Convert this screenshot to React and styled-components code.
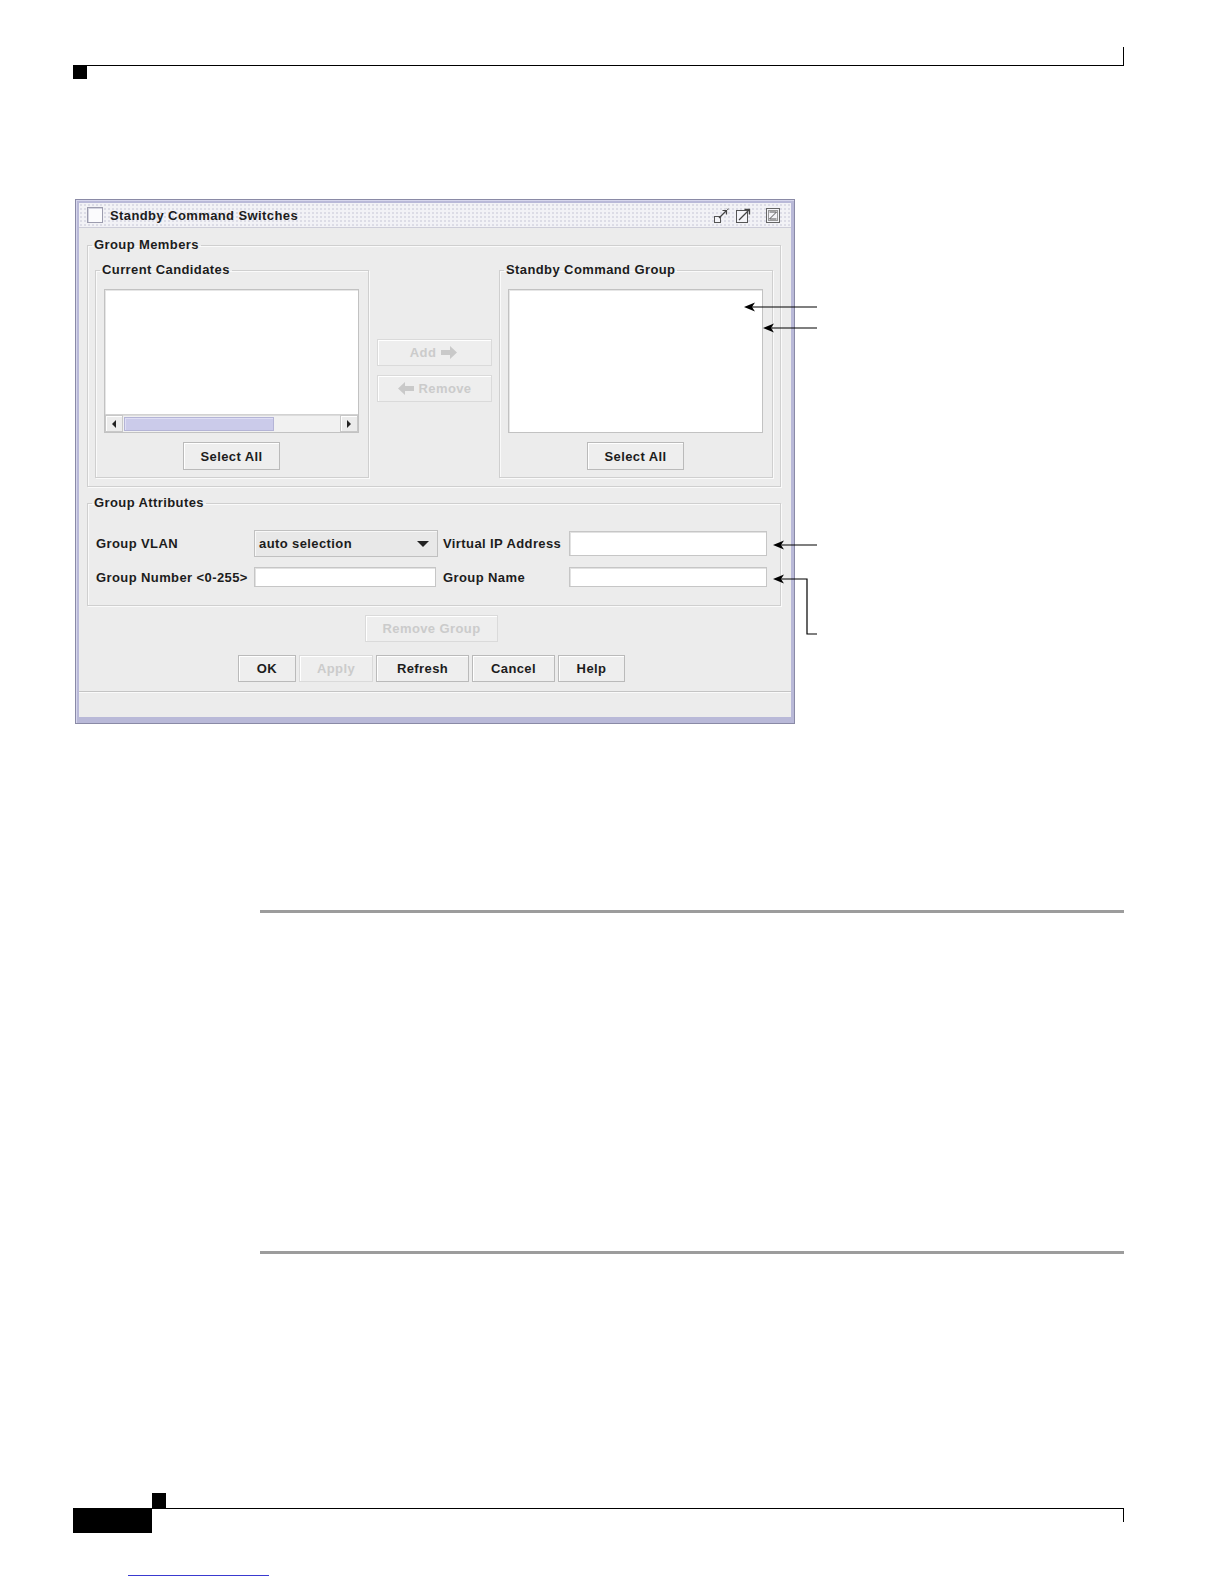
import React from 'react';
import styled, { createGlobalStyle } from 'styled-components';

const Global = createGlobalStyle`
  *, *::before, *::after { box-sizing: border-box; }
  html, body { margin: 0; padding: 0; background: #ffffff; }
  body { font-family: "Liberation Sans", Arial, sans-serif; }
`;

const FONT = `"Liberation Sans", Arial, sans-serif`;

const Page = styled.div`
  width: 1224px;
  height: 1584px;
  display: flex;
  flex-direction: column;
  overflow: hidden;
`;

const HeaderLine = styled.div`
  margin: 47px 0 0 73px;
  width: 1051px;
  height: 19px;
  border-right: 1px solid #000;
  border-bottom: 1px solid #000;
`;

const HeaderMark = styled.div`
  margin-left: 73px;
  width: 14px;
  height: 13px;
  background: #000;
`;

const Figure = styled.div`
  position: relative;
  margin: 120px 0 0 75px;
  width: 760px;
  height: 525px;
`;

const Dialog = styled.div`
  width: 720px;
  height: 525px;
  display: flex;
  flex-direction: column;
  border: 1px solid #8a8aa6;
  padding: 3px 3px 6px 3px;
  background: #b9b9d8;
  box-shadow: inset 1px 1px 0 #d6d6ec;
`;

const TitleBar = styled.div`
  height: 25px;
  flex: none;
  display: flex;
  align-items: center;
  padding: 0 11px 0 8px;
  background-color: #f2f2f6;
  background-image: radial-gradient(#dcdce6 0.9px, transparent 1.1px);
  background-size: 4px 4px;
  border-bottom: 1px solid #cdcdd8;
`;

const TitleBox = styled.div`
  width: 16px;
  height: 16px;
  background: #fbfbfd;
  border: 1px solid #9c9cae;
  box-shadow: inset 1px 1px 0 #d4d4e0;
`;

const TitleText = styled.span`
  margin-left: 7px;
  font: bold 13px ${FONT};
  letter-spacing: 0.4px;
  color: #1c1c1c;
  flex: 1;
`;

const TitleIcons = styled.div`
  display: flex;
  align-items: center;
  gap: 7px;
`;

const TitleIcon = styled.svg`
  display: block;
  margin-left: ${p => p.$gap || 0}px;
`;

const Body = styled.div`
  flex: 1;
  display: flex;
  flex-direction: column;
  background: #ececec;
`;

const Main = styled.div`
  display: flex;
  flex-direction: column;
  padding: 10px 10px 0 8px;
`;

const Group = styled.fieldset`
  margin: ${p => p.$mt || 0}px 0 0 0;
  padding: ${p => p.$pad};
  min-width: 0;
  width: ${p => (p.$w ? `${p.$w}px` : 'auto')};
  border: 1px solid #cfcfcf;
  box-shadow: inset 1px 1px 0 #fafafa, 1px 1px 0 #fafafa;
  display: flex;
  flex-direction: column;
`;

const Legend = styled.legend`
  padding: 0 2px;
  margin-left: ${p => p.$left}px;
  font: bold 13px/14px ${FONT};
  letter-spacing: 0.4px;
  color: #1c1c1c;
`;

const MembersRow = styled.div`
  display: flex;
  align-items: stretch;
`;

const MoveColumn = styled.div`
  width: 130px;
  display: flex;
  flex-direction: column;
  justify-content: center;
  align-items: center;
  gap: 9px;
`;

const ListBox = styled.div`
  height: 144px;
  display: flex;
  flex-direction: column;
  background: #fff;
  border: 1px solid #c2c2c2;
  box-shadow: inset 1px 1px 0 #e6e6e6;
`;

const ListArea = styled.div`
  flex: 1;
`;

const ScrollBar = styled.div`
  height: 18px;
  display: flex;
  background: #f1f1f1;
  border-top: 1px solid #d2d2d2;
`;

const ScrollButton = styled.div`
  width: 18px;
  display: flex;
  align-items: center;
  justify-content: center;
  background: #ececec;
  border: 1px solid #c8c8c8;
  box-shadow: inset 1px 1px 0 #fff;
`;

const ScrollTrack = styled.div`
  flex: 1;
  display: flex;
  padding: 1px;
  border-top: 1px solid #dcdcdc;
`;

const ScrollThumb = styled.div`
  width: 150px;
  background: #cbcbea;
  border: 1px solid #b4b4d6;
  box-shadow: inset 1px 1px 0 #dedef4;
`;

const Arrow = styled.div`
  width: 0;
  height: 0;
  border-top: 4px solid transparent;
  border-bottom: 4px solid transparent;
  ${p => (p.$dir === 'left' ? 'border-right: 4px solid #222;' : 'border-left: 4px solid #222;')}
`;

const ButtonLine = styled.div`
  display: flex;
  justify-content: center;
  gap: ${p => p.$gap || 0}px;
  margin: ${p => p.$mt || 0}px ${p => p.$shift || 0}px 0 0;
`;

const Button = styled.button`
  width: ${p => p.$w}px;
  height: ${p => p.$h || 27}px;
  padding: 0;
  display: inline-flex;
  align-items: center;
  justify-content: center;
  gap: 5px;
  font: bold 13px ${FONT};
  letter-spacing: 0.4px;
  color: ${p => (p.disabled ? '#cbcbcb' : '#1c1c1c')};
  background: #eeeeee;
  border: 1px solid ${p => (p.disabled ? '#dadada' : '#bababa')};
  box-shadow: inset 1px 1px 0 #ffffff;
`;

const AttrGrid = styled.div`
  display: grid;
  grid-template-columns: 158px 184px 131px 200px;
  grid-template-rows: 27px 20px;
  row-gap: 10px;
  align-items: center;
`;

const Label = styled.span`
  font: bold 13px ${FONT};
  letter-spacing: 0.4px;
  color: #1c1c1c;
  padding-left: ${p => p.$pl || 0}px;
  white-space: nowrap;
`;

const Combo = styled.div`
  height: 27px;
  display: flex;
  align-items: center;
  justify-content: space-between;
  padding: 0 8px 0 4px;
  background: #e8e8e8;
  border: 1px solid #c0c0c0;
  box-shadow: inset 1px 1px 0 #f8f8f8;
  font: bold 13px ${FONT};
  letter-spacing: 0.4px;
  color: #1c1c1c;
`;

const ComboArrow = styled.div`
  width: 0;
  height: 0;
  border-left: 6px solid transparent;
  border-right: 6px solid transparent;
  border-top: 6px solid #222;
`;

const TextField = styled.div`
  height: ${p => p.$h}px;
  margin-right: 2px;
  background: #fff;
  border: 1px solid #c6c6c6;
  box-shadow: inset 1px 1px 0 #e2e2e2;
`;

const StatusBar = styled.div`
  flex: 1;
  margin-top: 9px;
  border-top: 1px solid #c4c4c4;
  box-shadow: inset 0 1px 0 #fafafa;
`;

const Callouts = styled.svg`
  position: absolute;
  left: 0;
  top: 0;
  pointer-events: none;
`;

const Rule = styled.div`
  margin: ${p => p.$mt}px 0 0 260px;
  width: 864px;
  height: 3px;
  background: #9c9c9c;
`;

const FooterRow = styled.div`
  margin: 239px 0 0 73px;
  display: flex;
  align-items: flex-start;
`;

const FooterBlock = styled.div`
  margin-top: 15px;
  width: 79px;
  height: 25px;
  background: #000;
`;

const FooterRight = styled.div`
  display: flex;
  flex-direction: column;
`;

const FooterMark = styled.div`
  width: 14px;
  height: 15px;
  background: #000;
`;

const FooterLine = styled.div`
  width: 972px;
  height: 14px;
  border-top: 1px solid #000;
  border-right: 1px solid #000;
`;

const LinkLine = styled.div`
  margin: 42px 0 0 128px;
  width: 141px;
  height: 1px;
  background: #3a3ad0;
`;

const BlockArrow = ({ dir }) => (
  <svg width="17" height="13" viewBox="0 0 17 13">
    <path
      d={dir === 'right' ? 'M0 4 H9 V0 L16 6.5 L9 13 V9 H0 Z' : 'M17 4 H8 V0 L1 6.5 L8 13 V9 H17 Z'}
      fill="#c9c9c9"
    />
  </svg>
);

const ListWithScroll = () => (
  <ListBox>
    <ListArea />
    <ScrollBar>
      <ScrollButton><Arrow $dir="left" /></ScrollButton>
      <ScrollTrack><ScrollThumb /></ScrollTrack>
      <ScrollButton><Arrow $dir="right" /></ScrollButton>
    </ScrollBar>
  </ListBox>
);

const ArrowHead = ({ x, y }) => (
  <path d={`M${x} ${y} L${x + 11} ${y - 4.5} L${x + 8} ${y} L${x + 11} ${y + 4.5} Z`} fill="#000" />
);

export default function App() {
  return (
    <Page>
      <Global />
      <HeaderLine />
      <HeaderMark />

      <Figure>
        <Dialog>
          <TitleBar>
            <TitleBox />
            <TitleText>Standby Command Switches</TitleText>
            <TitleIcons>
              <TitleIcon width="15" height="15" viewBox="0 0 15 15">
                <rect x="0.5" y="8.5" width="6" height="6" fill="#f4f4f8" stroke="#555" />
                <path d="M5 10 L12 3" stroke="#444" strokeWidth="1.2" />
                <path d="M8.5 2.5 H12.5 V6.5" fill="none" stroke="#444" strokeWidth="1.2" />
                <path d="M13 0.5 L14.5 2 M14.5 0.5 L13 2" stroke="#666" strokeWidth="0.8" />
              </TitleIcon>
              <TitleIcon width="16" height="16" viewBox="0 0 16 16">
                <rect x="0.5" y="3.5" width="11" height="12" fill="#f4f4f8" stroke="#555" />
                <path d="M3 13 L13 3" stroke="#444" strokeWidth="1.3" />
                <path d="M8.5 2.5 H13.5 V7.5" fill="none" stroke="#444" strokeWidth="1.3" />
              </TitleIcon>
              <TitleIcon $gap={7} width="14" height="15" viewBox="0 0 14 15">
                <rect x="0.5" y="0.5" width="13" height="14" fill="#f4f4f8" stroke="#666" />
                <rect x="2.5" y="2.5" width="9" height="10" fill="none" stroke="#999" />
                <path d="M3.5 4 H10.5 L3.5 11 H10.5" fill="none" stroke="#555" strokeWidth="1" />
              </TitleIcon>
            </TitleIcons>
          </TitleBar>

          <Body>
            <Main>
              <Group $pad="11px 7px 8px 7px">
                <Legend $left={-3}>Group Members</Legend>
                <MembersRow>
                  <Group $w={274} $pad="12px 9px 7px 8px">
                    <Legend $left={-4}>Current Candidates</Legend>
                    <ListWithScroll />
                    <ButtonLine $mt={9}>
                      <Button $w={97} $h={28}>Select All</Button>
                    </ButtonLine>
                  </Group>

                  <MoveColumn>
                    <Button $w={115} disabled>
                      Add <BlockArrow dir="right" />
                    </Button>
                    <Button $w={115} disabled>
                      <BlockArrow dir="left" /> Remove
                    </Button>
                  </MoveColumn>

                  <Group $w={274} $pad="12px 9px 7px 8px">
                    <Legend $left={-4}>Standby Command Group</Legend>
                    <ListBox />
                    <ButtonLine $mt={9}>
                      <Button $w={97} $h={28}>Select All</Button>
                    </ButtonLine>
                  </Group>
                </MembersRow>
              </Group>

              <Group $mt={9} $pad="20px 11px 18px 8px">
                <Legend $left={-4}>Group Attributes</Legend>
                <AttrGrid>
                  <Label>Group VLAN</Label>
                  <Combo>
                    <span>auto selection</span>
                    <ComboArrow />
                  </Combo>
                  <Label $pl={5}>Virtual IP Address</Label>
                  <TextField $h={25} />

                  <Label>Group Number &lt;0-255&gt;</Label>
                  <TextField $h={20} />
                  <Label $pl={5}>Group Name</Label>
                  <TextField $h={20} />
                </AttrGrid>
              </Group>

              <ButtonLine $mt={9} $shift={5}>
                <Button $w={133} disabled>Remove Group</Button>
              </ButtonLine>

              <ButtonLine $mt={13} $gap={3} $shift={5}>
                <Button $w={58}>OK</Button>
                <Button $w={74} disabled>Apply</Button>
                <Button $w={93}>Refresh</Button>
                <Button $w={83}>Cancel</Button>
                <Button $w={67}>Help</Button>
              </ButtonLine>
            </Main>
            <StatusBar />
          </Body>
        </Dialog>

        <Callouts width="760" height="525" viewBox="0 0 760 525">
          <g stroke="#000" strokeWidth="1.2" fill="none">
            <path d="M676 108 H742" />
            <path d="M695 129 H742" />
            <path d="M705 346 H742" />
            <path d="M705 380 H732 V435 H742" />
          </g>
          <ArrowHead x={669} y={108} />
          <ArrowHead x={688} y={129} />
          <ArrowHead x={698} y={346} />
          <ArrowHead x={698} y={380} />
        </Callouts>
      </Figure>

      <Rule $mt={186} />
      <Rule $mt={338} />

      <FooterRow>
        <FooterBlock />
        <FooterRight>
          <FooterMark />
          <FooterLine />
        </FooterRight>
      </FooterRow>
      <LinkLine />
    </Page>
  );
}
